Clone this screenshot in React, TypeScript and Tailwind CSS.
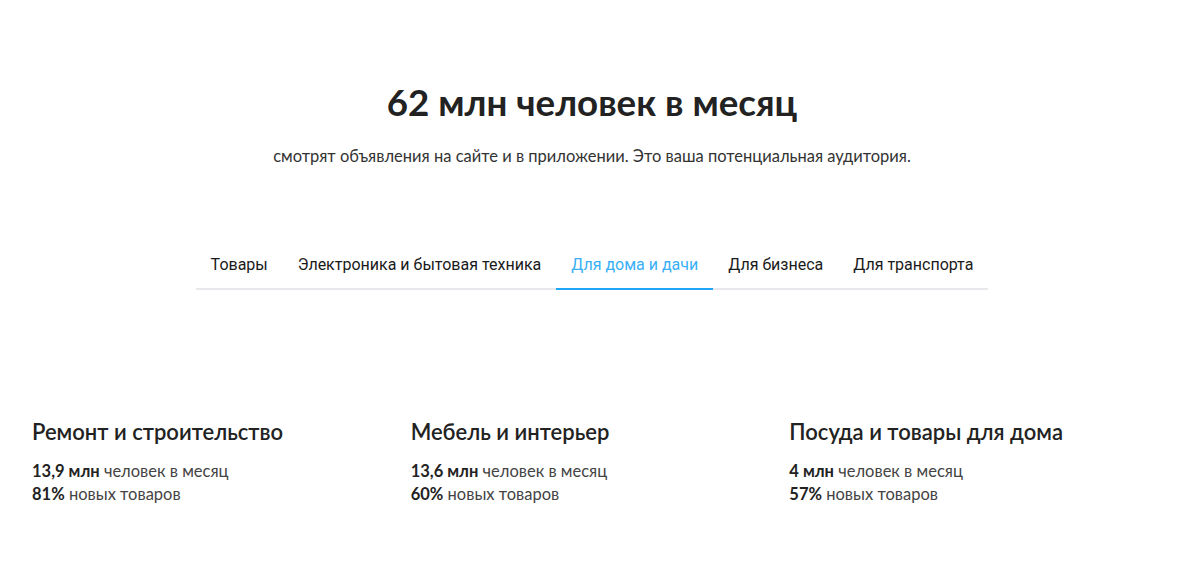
import React from 'react'

const tabs = ['Товары', 'Электроника и бытовая техника', 'Для дома и дачи', 'Для бизнеса', 'Для транспорта']

const cards = [
  { title: 'Ремонт и строительство', people: '13,9 млн', share: '81%' },
  { title: 'Мебель и интерьер', people: '13,6 млн', share: '60%' },
  { title: 'Посуда и товары для дома', people: '4 млн', share: '57%' },
]

const App: React.FC = () => {
  return (
    <div className="w-[1200px] h-[572px] bg-white text-[#222] font-['Lato','Noto_Sans',sans-serif]">
      <div className="flex flex-col items-center pr-4 pt-[78px]">
        <h1 className="text-[36.7px] font-bold leading-[48px] text-[#222]">62 млн человек в месяц</h1>
        <p className="mt-[19px] text-[16.5px] leading-[22px] text-[#333]">
          смотрят объявления на сайте и в приложении. Это ваша потенциальная аудитория.
        </p>
        <div className="mt-[86px] flex border-b-2 border-[#e8e8ec] font-['Roboto',sans-serif]">
          {tabs.map((t) => {
            const active = t === 'Для дома и дачи'
            return (
              <div
                key={t}
                className={
                  active
                    ? 'px-[15px] pb-[11px] -mb-[2px] border-b-2 border-[#1fa6f7] text-[16px] leading-[24px] text-[#3ab0f7]'
                    : 'px-[15px] pb-[11px] text-[16px] leading-[24px] text-[#1a1a1a]'
                }
              >
                {t}
              </div>
            )
          })}
        </div>
      </div>
      <div className="grid grid-cols-3 px-8 pt-[127px]">
        {cards.map((c) => (
          <div key={c.title}>
            <h2 className="text-[22px] font-semibold leading-[30px] text-[#222]">{c.title}</h2>
            <div className="mt-[13px] text-[16.5px] leading-[23px] text-[#444]">
              <div>
                <span className="font-bold text-[#222]">{c.people}</span> человек в месяц
              </div>
              <div>
                <span className="font-bold text-[#222]">{c.share}</span> новых товаров
              </div>
            </div>
          </div>
        ))}
      </div>
    </div>
  )
}

export default App
